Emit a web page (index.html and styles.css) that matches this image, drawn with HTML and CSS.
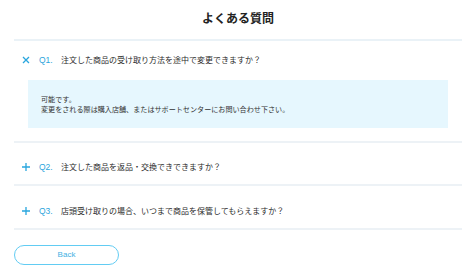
FILE: index.html
```html
<!DOCTYPE html>
<html lang="ja">
<head>
    <title>よくある質問</title>
    <meta charset="utf-8" />
    <link rel="stylesheet" href="styles.css">
</head>
<body>
    <div id="wrapper">
        <h1 class="faq-title">よくある質問</h1>
        <div class="faq-item is-open">
            <div class="faq-q">
                <span class="faq-icon">
                    <svg width="8" height="8" viewBox="0 0 8 8"><path d="M1 1L7 7M7 1L1 7" stroke="#29a6de" stroke-width="1.3" fill="none"/></svg>
                </span>
                <span class="faq-num">Q1.</span>
                <span class="faq-text">注文した商品の受け取り方法を途中で変更できますか？</span>
            </div>
            <div class="faq-a">
                可能です。<br />
                変更をされる際は購入店舗、またはサポートセンターにお問い合わせ下さい。
            </div>
        </div>
        <div class="faq-item">
            <div class="faq-q">
                <span class="faq-icon">
                    <svg width="8" height="8" viewBox="0 0 8 8"><path d="M4 0V8M0 4H8" stroke="#29a6de" stroke-width="1.3" fill="none"/></svg>
                </span>
                <span class="faq-num">Q2.</span>
                <span class="faq-text">注文した商品を返品・交換できできますか？</span>
            </div>
        </div>
        <div class="faq-item faq-last">
            <div class="faq-q">
                <span class="faq-icon">
                    <svg width="8" height="8" viewBox="0 0 8 8"><path d="M4 0V8M0 4H8" stroke="#29a6de" stroke-width="1.3" fill="none"/></svg>
                </span>
                <span class="faq-num">Q3.</span>
                <span class="faq-text">店頭受け取りの場合、いつまで商品を保管してもらえますか？</span>
            </div>
        </div>
        <a class="btn-back" href="#">Back</a>
    </div>
</body>
</html>
```

FILE: styles.css
```css
body { margin:0; background:#fff; font-family:"Noto Sans CJK JP", "Noto Sans", sans-serif; color:#333; }
#wrapper { padding:0 9px 0 14px; }
.faq-title { margin:0; padding:10px 0 13px; font-size:12px; line-height:16px; font-weight:bold; text-align:center; color:#222; border-bottom:2px solid #eaf2f7; }
.faq-item { border-bottom:2px solid #edf2f6; }
.faq-q { display:flex; align-items:center; padding:18px 0 11px 8px; font-size:8px; line-height:12px; }
.is-open .faq-q { padding:13px 0 14px 8px; }
.faq-icon { display:flex; width:17px; }
.faq-num { width:22px; color:#2ba4dc; font-family:"Liberation Sans", sans-serif; font-size:8.5px; }
.faq-text { color:#2b2b2b; }
.faq-a { margin:0 14px 13px; padding:14px 13px; background:#e6f7fe; font-size:7.1px; line-height:10px; color:#333; }
.faq-last .faq-q { padding-top:19px; }
.btn-back { display:block; width:103px; height:18px; margin-top:15px; border:1px solid #62ccf3; border-radius:10px; text-align:center; line-height:18px; font-family:"Liberation Sans", sans-serif; font-size:8px; color:#3fb0e3; text-decoration:none; }
```
